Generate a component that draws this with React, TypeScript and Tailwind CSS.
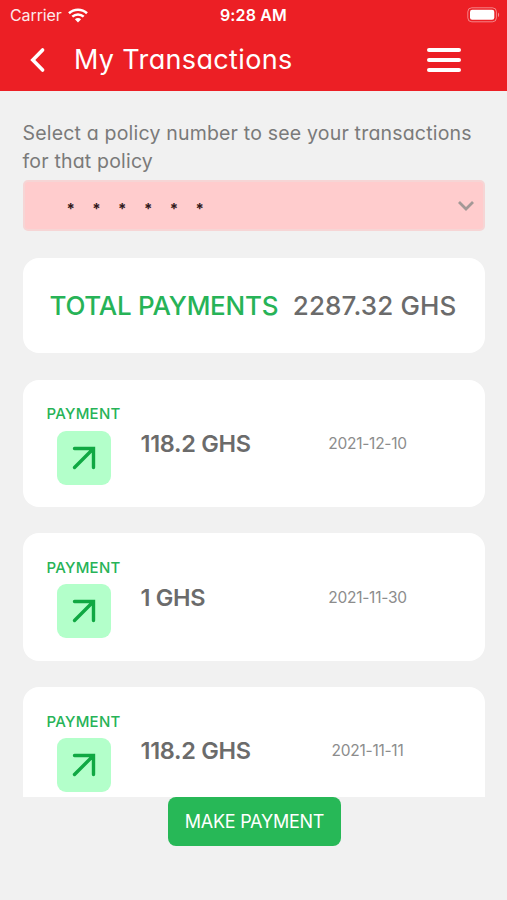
import { clsx } from "clsx";

type Transaction = {
    amount: string;
    date: string;
};

const transactions: Transaction[] = [
    { amount: "118.2 GHS", date: "2021-12-10" },
    { amount: "1 GHS", date: "2021-11-30" },
    { amount: "118.2 GHS", date: "2021-11-11" },
];

const StatusBar = () => (
    <div className="grid h-[30px] grid-cols-3 items-center pr-[7px] pl-[10px] text-white [font-feature-settings:normal]">
        <div className="flex items-center">
            <span className="w-[52px] text-[16px] leading-none tracking-[-0.1px] opacity-90">Carrier</span>
            <svg width="20" height="15" viewBox="0 0 20 15" className="ml-[6px]" fill="none" stroke="white">
                <path d="M1 5.2C6 .6 14 .6 19 5.2" strokeWidth="2.6" />
                <path d="M4.3 8.7c3.3-3 8.1-3 11.4 0" strokeWidth="2.5" />
                <path d="M10 14.4l-3.1-3.2c1.7-1.6 4.5-1.6 6.2 0z" fill="white" stroke="none" />
            </svg>
        </div>
        <span className="-ml-[3px] text-center text-[16px] leading-none font-semibold tracking-[0.15px] whitespace-nowrap">9:28 AM</span>
        <div className="flex justify-end">
            <svg width="33" height="16" viewBox="0 0 33 16" fill="none">
                <rect x=".8" y=".8" width="28.6" height="14" rx="4" stroke="white" strokeOpacity=".45" />
                <rect x="3" y="2.8" width="24.3" height="10" rx="2.2" fill="white" />
                <path d="M31 5.5c1.5.8 1.5 3.8 0 4.6z" fill="white" fillOpacity=".5" />
            </svg>
        </div>
    </div>
);

const Header = () => (
    <header className="h-[91px] bg-[#ec1f25]">
        <StatusBar />
        <div className="flex h-[60px] items-center pr-[46px] pl-[29px]">
            <svg width="17" height="26" viewBox="0 0 17 26" fill="none" stroke="white" strokeWidth="3.6">
                <path d="M13.6 3L3.8 13l9.8 10" strokeLinecap="round" strokeLinejoin="miter" />
            </svg>
            <h1 className="ml-[28px] pb-[2px] text-[27px] leading-none tracking-[0.35px] whitespace-nowrap text-white">My Transactions</h1>
            <div className="ml-auto flex w-[34px] flex-col gap-[6px]">
                <div className="h-1 rounded-full bg-white" />
                <div className="h-1 rounded-full bg-white" />
                <div className="h-1 rounded-full bg-white" />
            </div>
        </div>
    </header>
);

const PolicySelect = () => (
    <div className="mt-[5px] flex h-[51px] items-center rounded-[5px] border-2 border-[#f6d5d5] bg-[#ffcccd] pr-[8px] pl-[42px]">
        <div className="flex gap-[17.8px]">
            {[0, 1, 2, 3, 4, 5].map((x) => (
                <span key={x} className="h-[16px] w-2 text-center text-[15px] leading-[22px] font-bold text-[#32191b]">*</span>
            ))}
        </div>
        <svg width="18" height="12" viewBox="0 0 18 12" className="ml-auto" fill="none" stroke="#a39896" strokeWidth="2.8">
            <path d="M2 2l7 7 7-7" />
        </svg>
    </div>
);

const TransactionCard = ({ amount, date }: Transaction) => (
    <div className="flex h-[127.5px] shrink-0 rounded-[16px] bg-white pl-[23px]">
        <div className="flex w-[76px] flex-col items-center pt-[25.6px]">
            <span className="text-[15px] leading-[17px] font-medium tracking-[0.25px] whitespace-nowrap text-[#27b357]">PAYMENT</span>
            <div className="mt-[8.6px] flex size-[54px] items-center justify-center rounded-[9px] bg-[#b3ffca]">
                <svg width="24" height="24" viewBox="0 0 24 24" fill="none" stroke="#10a843" strokeWidth="3.4" strokeLinecap="round">
                    <path d="M2.5 2.5h19v19M21 3L2.5 21.5" />
                </svg>
            </div>
        </div>
        <span className="ml-[19px] w-[150px] pt-[50.3px] text-[23.5px] leading-[28px] font-semibold tracking-[-0.3px] whitespace-nowrap text-[#6b6b6b]">{amount}</span>
        <span className="ml-[27px] w-[100px] pt-[50.3px] text-center text-[15.5px] leading-[28px] tracking-[-0.25px] whitespace-nowrap text-[#8c8c8c]">{date}</span>
    </div>
);

const App = () => {
    return (
        <div className={clsx("flex h-[900px] w-[507px] flex-col overflow-hidden bg-[#f1f1f1]", "font-[Inter,sans-serif] [font-feature-settings:'cv11']")}>
            <Header />
            <main className="flex flex-col px-[22.5px] pt-[28px]">
                <p className="text-[19.5px] leading-[28px] tracking-[0.19px] whitespace-nowrap text-[#7a7a7a]">
                    Select a policy number to see your transactions
                    <br />
                    for that policy
                </p>
                <PolicySelect />
                <div className="mt-[27px] flex h-[94.5px] items-center justify-between rounded-[16px] bg-white pr-[28px] pl-[27px] text-[26px] font-medium whitespace-nowrap">
                    <span className="tracking-[-0.25px] text-[#27b357]">TOTAL PAYMENTS</span>
                    <span className="tracking-[0.15px] text-[#6b6b6b]">2287.32 GHS</span>
                </div>
                <div className="mt-[27px] flex h-[417px] flex-col gap-[26.25px] overflow-hidden">
                    {transactions.map((item) => (
                        <TransactionCard key={item.date} {...item} />
                    ))}
                </div>
                <button className="ml-[145.5px] h-[49.5px] w-[173px] rounded-[8px] bg-[#27b857] text-[18px] tracking-[-0.25px] whitespace-nowrap text-white">MAKE PAYMENT</button>
            </main>
        </div>
    );
};

export default App;
